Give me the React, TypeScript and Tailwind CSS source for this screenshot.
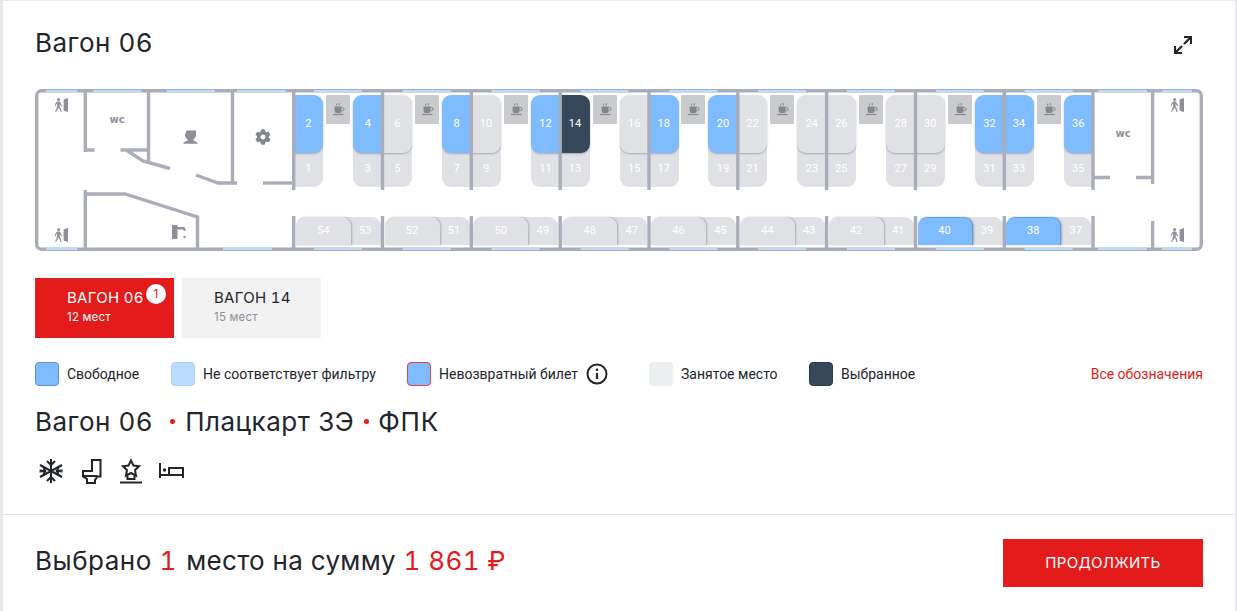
import React from "react";
import { FaCog } from "react-icons/fa";

const centers = [293.7, 382.5, 471.3, 560.2, 649, 737.8, 826.6, 915.5, 1004.3, 1093];
const OX = 35;
const OY = 89;
const FREE = [2, 4, 8, 12, 18, 20, 32, 34, 36, 40, 38];

function seatColor(n: number) {
  if (n === 14) return "bg-[#364859]";
  if (FREE.includes(n)) return "bg-[#7fbbff]";
  return "bg-[#e0e1e5]";
}

type Side = "left" | "right";

function UpperPair({ c, up, low, side }: { c: number; up: number; low: number; side: Side }) {
  const x = side === "left" ? c - 29.5 : c;
  const w = 29.5;
  const rLow = side === "left" ? "rounded-bl-[9px]" : "rounded-br-[9px]";
  const rUp = side === "left" ? "rounded-l-[9px]" : "rounded-r-[9px]";
  return (
    <>
      <div
        className={`absolute bg-[#e0e1e5] ${rLow} flex items-end justify-center pb-[12px] font-['Roboto',sans-serif] text-[11px] leading-[13px] text-white`}
        style={{ left: x - OX, top: 130 - OY, width: w, height: 57 }}
      >
        {low}
      </div>
      <div
        className={`absolute ${seatColor(up)} ${rUp} shadow-[0_1px_2px_rgba(60,70,90,0.35)] flex items-center justify-center font-['Roboto',sans-serif] text-[11px] text-white`}
        style={{ left: x - OX, top: 95 - OY, width: w, height: 58 }}
      >
        {up}
      </div>
    </>
  );
}

function LowerBay({ c, big, small }: { c: number; big: number; small: number }) {
  const free = FREE.includes(big);
  return (
    <>
      <div
        className="absolute bg-[#e0e1e5] rounded-tr-[9px] flex items-center justify-center pl-[26px] font-['Roboto',sans-serif] text-[11px] text-white"
        style={{ left: c + 30 - OX, top: 217 - OY, width: 57, height: 28 }}
      >
        {small}
      </div>
      <div
        className={`absolute ${seatColor(big)} rounded-t-[9px] shadow-[1px_0_2px_rgba(60,70,90,0.35)] flex items-center justify-center font-['Roboto',sans-serif] text-[11px] text-white ${free ? "border-r border-t border-[#5f9de6]" : ""}`}
        style={{ left: c + 2 - OX, top: 217 - OY, width: 55, height: 28 }}
      >
        {big}
      </div>
    </>
  );
}

function Person({ x, y }: { x: number; y: number }) {
  return (
    <g transform={`translate(${x} ${y})`} fill="#8e9099" stroke="none">
      <circle cx="4.6" cy="1.5" r="1.5" />
      <path d="M3.2 3.4h2.8l1.3 3 1 1.4-.8.6-1.4-1.6-.3-.8-.2 2.6 1.4 2.4.6 3h-1.1l-.8-2.8-1.3-1.6-1 2.3-1.6 2.1-.8-.6 1.4-2.4.7-3.6.1-2-1 .9-.5 2-.9-.2.6-2.6z" />
      <path d="M9.6 1.4 14 0v14l-4.4-1.2z" />
    </g>
  );
}

function Coffee({ c }: { c: number }) {
  return (
    <div
      className="absolute bg-[#c9cbcf] rounded-[1px]"
      style={{ left: c + 32.4 - OX, top: 95 - OY, width: 24, height: 29 }}
    >
      <svg width="24" height="29" viewBox="0 0 24 29" className="block">
        <g transform="translate(3 0)">
          <path d="M5.6 11.5h7v4.6a2 2 0 0 1-2 2H7.6a2 2 0 0 1-2-2z" fill="#85878e" />
          <path d="M12.6 12.6h1a1.4 1.4 0 0 1 0 3h-1" fill="none" stroke="#85878e" strokeWidth="1" />
          <path d="M7.6 10.4V8.6M10.2 10.4V8" stroke="#85878e" strokeWidth="1" />
          <path d="M4 19.5h10.5" stroke="#85878e" strokeWidth="1.2" />
        </g>
      </svg>
    </div>
  );
}

function CarMap() {
  const wall = "#a9adba";
  const win = "#b9dcff";
  const topWins: [number, number][] = [
    [46, 31], [93, 48], [167, 48], [237, 49],
    ...centers.slice(0, 9).map((c): [number, number] => [c + 20.3, 48]),
    [1098, 49], [1162, 30],
  ];
  const botWins: [number, number][] = [
    [46, 31], [223, 49],
    ...centers.slice(0, 9).map((c): [number, number] => [c + 20.3, 48]),
    [1098, 49], [1162, 30],
  ];
  const evens = [4, 8, 12, 16, 20, 24, 28, 32];
  return (
    <div className="relative w-[1168px] h-[162px]">
      <UpperPair c={centers[0]} up={2} low={1} side="right" />
      {evens.map((n, i) => (
        <React.Fragment key={n}>
          <UpperPair c={centers[i + 1]} up={n} low={n - 1} side="left" />
          <UpperPair c={centers[i + 1]} up={n + 2} low={n + 1} side="right" />
        </React.Fragment>
      ))}
      <UpperPair c={centers[9]} up={36} low={35} side="left" />
      {centers.slice(0, 9).map((c) => (
        <Coffee key={c} c={c} />
      ))}
      {centers.slice(0, 9).map((c, i) => (
        <LowerBay key={c} c={c} big={54 - i * 2} small={53 - i * 2} />
      ))}
      <svg
        className="absolute inset-0 pointer-events-none"
        width="1168"
        height="162"
        viewBox="35 89 1168 162"
      >
        <rect x="36.7" y="90.7" width="1164.6" height="158.6" rx="5" fill="none" stroke={wall} strokeWidth="3.4" />
        {topWins.map(([x, w]) => (
          <rect key={`t${x}`} x={x} y="90" width={w} height="2" fill={win} />
        ))}
        {botWins.map(([x, w]) => (
          <rect key={`b${x}`} x={x} y="248" width={w} height="2" fill={win} />
        ))}
        <g stroke={wall} strokeWidth="3.4" fill="none">
          {centers.map((c) => (
            <React.Fragment key={c}>
              <path d={`M${c} 91V190`} />
              <path d={`M${c} 216V249`} />
            </React.Fragment>
          ))}
          <path d="M85.3 91V152M85 150H94.5" />
          <path d="M120.5 150H148.5" />
          <path d="M148.5 91V161" />
          <path d="M127 150.5L143 161L170 168.5" />
          <path d="M196 175L218 183H237" />
          <path d="M232.5 91V183" />
          <path d="M263 183H293" />
          <path d="M85.3 190V249" />
          <path d="M85 194H125L197.5 217V249" />
          <path d="M1152.6 91V184" />
          <path d="M1136 177.5H1152M1094 177.5H1110" />
          <path d="M1152.6 221V249" />
        </g>
        <Person x={54} y={98} />
        <Person x={54} y={228} />
        <Person x={1170} y={98} />
        <Person x={1170} y={228} />
        <text x="117" y="123" textAnchor="middle" fontFamily="'DejaVu Sans', sans-serif" fontWeight="700" fontSize="10" fill="#8e9099">wc</text>
        <text x="1123" y="137" textAnchor="middle" fontFamily="'DejaVu Sans', sans-serif" fontWeight="700" fontSize="10" fill="#8e9099">wc</text>
        <path d="M186.5 130.5h9.5v4.5c0 2-1.2 3.5-2.5 4v1.5l4 2v1.2h-14v-1.2l4-2V139c-1.3-.5-2.5-2-2.5-4z" fill="#8e9099" />
        <FaCog x={255} y={129} width={16} height={16} color="#85878e" />
        <path d="M172 225h5.5v2h6.5l1.5 1.5v2.5h-2v-1.5h-6v9.5H172z" fill="#8e9099" />
        <circle cx="184.5" cy="237" r="1.2" fill="#8e9099" />
      </svg>
    </div>
  );
}

function Swatch({ cls }: { cls: string }) {
  return <span className={`w-6 h-6 rounded-[4px] border shrink-0 ${cls}`} />;
}

function LegendItem({ cls, label, className }: { cls: string; label: string; className: string }) {
  return (
    <div className={`flex items-center gap-2 ${className}`}>
      <Swatch cls={cls} />
      <span>{label}</span>
    </div>
  );
}

function Dot() {
  return <span className="inline-block w-[5px] h-[5px] rounded-full bg-[#e31b1b] align-middle" />;
}

const ink = "#22252b";

export default function App() {
  return (
    <div className="w-[1237px] h-[611px] overflow-hidden bg-[#e8e9ee] pl-[3px] pr-[2px] pt-[1px]">
      <div className="bg-white h-[610px] flex flex-col font-['Inter',sans-serif] text-[#22252b]">
        <div className="px-8 pt-[24px] h-[88px] flex items-start justify-between">
          <h1 className="text-[26px] leading-[36px] font-normal tracking-[0.5px] tabular-nums">Вагон 06</h1>
          <svg width="18" height="18" viewBox="0 0 18 18" className="mt-[11px] mr-[11px]" fill="none" stroke={ink} strokeWidth="2.2">
            <path d="M10 8L17 1M10 1H17V8" />
            <path d="M8 10L1 17M1 10V17H8" />
          </svg>
        </div>
        <div className="px-8">
          <CarMap />
        </div>
        <div className="px-8 mt-[27px] flex gap-2">
          <div className="relative w-[139px] h-[60px] bg-[#e31b1b] text-white pl-8 pt-[10px]">
            <div className="text-[15px] leading-[20px] tracking-[0.3px] tabular-nums">ВАГОН 06</div>
            <div className="text-[11.5px] leading-[16px] tracking-[0.2px] mt-[1px]">12 мест</div>
            <div className="absolute left-[111px] top-[6px] w-5 h-5 rounded-full bg-white text-[#e31b1b] text-[12px] flex items-center justify-center">1</div>
          </div>
          <div className="w-[139px] h-[60px] bg-[#f2f2f2] pl-8 pt-[10px]">
            <div className="text-[15px] leading-[20px] tracking-[0.3px] tabular-nums">ВАГОН 14</div>
            <div className="text-[11.5px] leading-[16px] tracking-[0.2px] mt-[1px] text-[#8e9099]">15 мест</div>
          </div>
        </div>
        <div className="px-8 mt-6 h-6 flex items-center font-['Roboto',sans-serif] text-[14px]">
          <LegendItem cls="bg-[#7fbbff] border-[#5b8fe0]" label="Свободное" className="w-[136px]" />
          <LegendItem cls="bg-[#b9dcff] border-[#a9d2ff]" label="Не соответствует фильтру" className="w-[236px]" />
          <LegendItem cls="bg-[#7fbbff] border-[#e5405a]" label="Невозвратный билет" className="" />
          <svg width="22" height="22" viewBox="0 0 22 22" className="ml-[8px] mr-[41px]" fill="none">
            <circle cx="11" cy="11" r="9.5" stroke={ink} strokeWidth="2" />
            <circle cx="11" cy="6.8" r="1.3" fill={ink} />
            <path d="M11 10V16" stroke={ink} strokeWidth="2.2" />
          </svg>
          <LegendItem cls="bg-[#ebeff0] border-[#ebeff0]" label="Занятое место" className="w-[160px]" />
          <LegendItem cls="bg-[#364859] border-[#2a3a48]" label="Выбранное" className="" />
          <a className="ml-auto text-[#e31b1b]">Все обозначения</a>
        </div>
        <div className="px-8 mt-[17px] h-[36px] flex items-center text-[26px] tracking-[0.5px]">
          <span className="tabular-nums">Вагон 06</span>
          <span className="ml-[17px] mr-[10px] flex items-center"><Dot /></span>
          <span>Плацкарт 3Э</span>
          <span className="ml-[10px] mr-[9px] flex items-center"><Dot /></span>
          <span className="tracking-[0.8px]">ФПК</span>
        </div>
        <div className="px-8 mt-[19px] h-[26px] flex items-center">
          <svg width="150" height="26" viewBox="35 458 150 26" fill="none" stroke={ink} strokeWidth="2">
            <path d="M51 459V483M40 465L62 477M62 465L40 477" />
            <path d="M47 461L51 465L55 461M47 481L51 477L55 481M39.5 470.5L45 471L43 466M62.5 470.5L57 471L59 466M39.5 471.5L45 471L43 476M62.5 471.5L57 471L59 476" />
            <path d="M92 471V460H100.5V476.5H97.5L95 480V483H87V479L83 476.5V471ZM83 476H97" />
            <path d="M131 460.5L133.5 465.5L139 466.3L135 470.2L136 475.7L131 473L126 475.7L127 470.2L123 466.3L128.5 465.5Z" />
            <path d="M127.5 475.5V479H134.5V475.5" />
            <path d="M120 482.5H142" />
            <path d="M160 463V478M160 475H183M183 478V468H169V475" />
            <circle cx="164.5" cy="470" r="1.8" fill={ink} stroke="none" />
          </svg>
        </div>
        <div className="mt-[30px] border-t border-[#dfe0e4] h-[96px] px-8 pt-6 flex justify-between items-start">
          <div className="text-[26px] leading-[48px] tracking-[0.3px] mt-[-2px]">
            <span className="tracking-[0.5px]">Выбрано</span>{" "}
            <span className="text-[#e31b1b] mr-[2px] tabular-nums">1</span> место на сумму{" "}
            <span className="text-[#e31b1b] tracking-[0.4px] tabular-nums">1 861 ₽</span>
          </div>
          <button className="w-[200px] h-12 bg-[#e31b1b] text-white text-[15px] tracking-[0.3px]">ПРОДОЛЖИТЬ</button>
        </div>
      </div>
    </div>
  );
}
